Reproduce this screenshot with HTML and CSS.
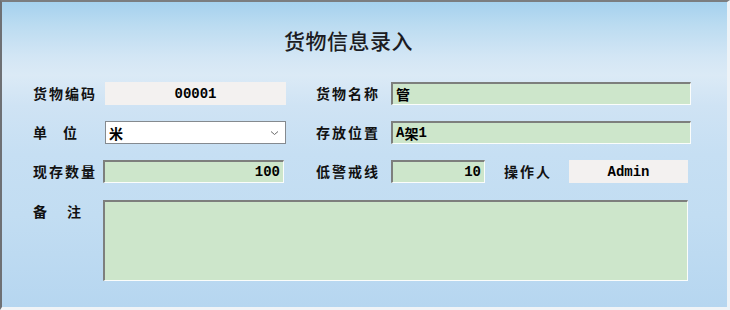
FILE: index.html
```html
<!DOCTYPE html>
<html lang="zh-CN">
<head>
<meta charset="utf-8">
<title>货物信息录入</title>
<link rel="stylesheet" href="styles.css">
</head>
<body>
<div class="window">
  <h1 class="title">货物信息录入</h1>
  <div class="form">
    <div class="row">
      <span class="label w72">货物编码</span>
      <div class="field readonly w181 center mono">00001</div>
      <span class="label w75 ml30">货物名称</span>
      <div class="field green w300 cjk">管</div>
    </div>
    <div class="row">
      <span class="label w72 wide">单位</span>
      <div class="select w181">
        <span class="cjk">米</span>
        <svg class="chev" width="9" height="6" viewBox="0 0 9 6"><path d="M1 1.5 L4.5 4.5 L8 1.5" fill="none" stroke="#6a6a6a" stroke-width="1"/></svg>
      </div>
      <span class="label w75 ml30">存放位置</span>
      <div class="field green w300"><span class="mono">A</span><span class="cjk">架</span><span class="mono">1</span></div>
    </div>
    <div class="row">
      <span class="label w70">现存数量</span>
      <div class="field green w181 right mono">100</div>
      <span class="label w75 ml32">低警戒线</span>
      <div class="field green w94 right mono">10</div>
      <span class="label w65 ml19">操作人</span>
      <div class="field readonly w119 center mono">Admin</div>
    </div>
    <div class="row top">
      <span class="label w70 wider">备注</span>
      <div class="field green area"></div>
    </div>
  </div>
</div>
</body>
</html>
```

FILE: styles.css
```css
html, body {
  margin: 0;
  padding: 0;
}
body {
  width: 730px;
  height: 310px;
  overflow: hidden;
  font-family: "Noto Sans CJK SC", "Liberation Sans", sans-serif;
}
.window {
  box-sizing: border-box;
  width: 730px;
  height: 310px;
  border-top: 2px solid #7b7d80;
  border-left: 2px solid #6e7074;
  border-right: 3px solid #eef3f7;
  border-bottom: 3px solid #f1f4f7;
  background: linear-gradient(to bottom,
    #a5d1ee 0%,
    #bcdcf1 8%,
    #d3e6f5 18%,
    #dbeaf6 24%,
    #cfe3f4 34%,
    #c6dff3 50%,
    #c2ddf2 70%,
    #b6d6f0 100%);
  padding-top: 23px;
}
.title {
  margin: 0 0 0 282px;
  height: 30px;
  font-size: 21px;
  line-height: 30px;
  font-weight: 500;
  color: #1c1c22;
  letter-spacing: 0.5px;
}
.form {
  padding-left: 31px;
  margin-top: 27px;
  display: flex;
  flex-direction: column;
  gap: 16px;
}
.row {
  display: flex;
  align-items: center;
  height: 23px;
}
.row.top {
  align-items: flex-start;
  height: auto;
  margin-top: 1px;
}
.label {
  box-sizing: border-box;
  font-size: 14px;
  font-weight: 700;
  color: #111;
  letter-spacing: 2px;
  line-height: 23px;
  white-space: nowrap;
}
.label.wide { letter-spacing: 16px; }
.label.wider { letter-spacing: 20px; }
.w65 { width: 65px; flex: none; }
.w70 { width: 70px; flex: none; }
.w72 { width: 72px; flex: none; }
.w75 { width: 75px; flex: none; }
.w94 { width: 94px; flex: none; }
.w119 { width: 119px; flex: none; }
.w181 { width: 181px; flex: none; }
.w300 { width: 300px; flex: none; }
.ml19 { margin-left: 19px; }
.ml30 { margin-left: 30px; }
.ml32 { margin-left: 32px; }
.field {
  box-sizing: border-box;
  height: 23px;
  display: flex;
  align-items: center;
  font-size: 14px;
  color: #000;
  padding: 0 3px;
}
.mono {
  font-family: "Liberation Mono", "DejaVu Sans Mono", monospace;
  font-weight: 700;
  font-size: 14px;
}
.cjk {
  font-family: "Noto Sans CJK SC", sans-serif;
  font-weight: 700;
  font-size: 14px;
}
.field.readonly {
  background: #f3f1f0;
}
.field.green {
  background: #cde6cb;
  border-top: 2px solid #7d7f7d;
  border-left: 2px solid #7d7f7d;
  border-right: 1px solid #fbfdfb;
  border-bottom: 1px solid #fbfdfb;
}
.field.center { justify-content: center; }
.field.right { justify-content: flex-end; padding-right: 3px; }
.field.area {
  width: 585px;
  height: 81px;
  flex: none;
}
.select {
  box-sizing: border-box;
  height: 23px;
  display: flex;
  align-items: center;
  justify-content: space-between;
  background: #fff;
  border: 1px solid #858a8f;
  padding: 0 6px 0 3px;
}
.chev { display: block; }
```
